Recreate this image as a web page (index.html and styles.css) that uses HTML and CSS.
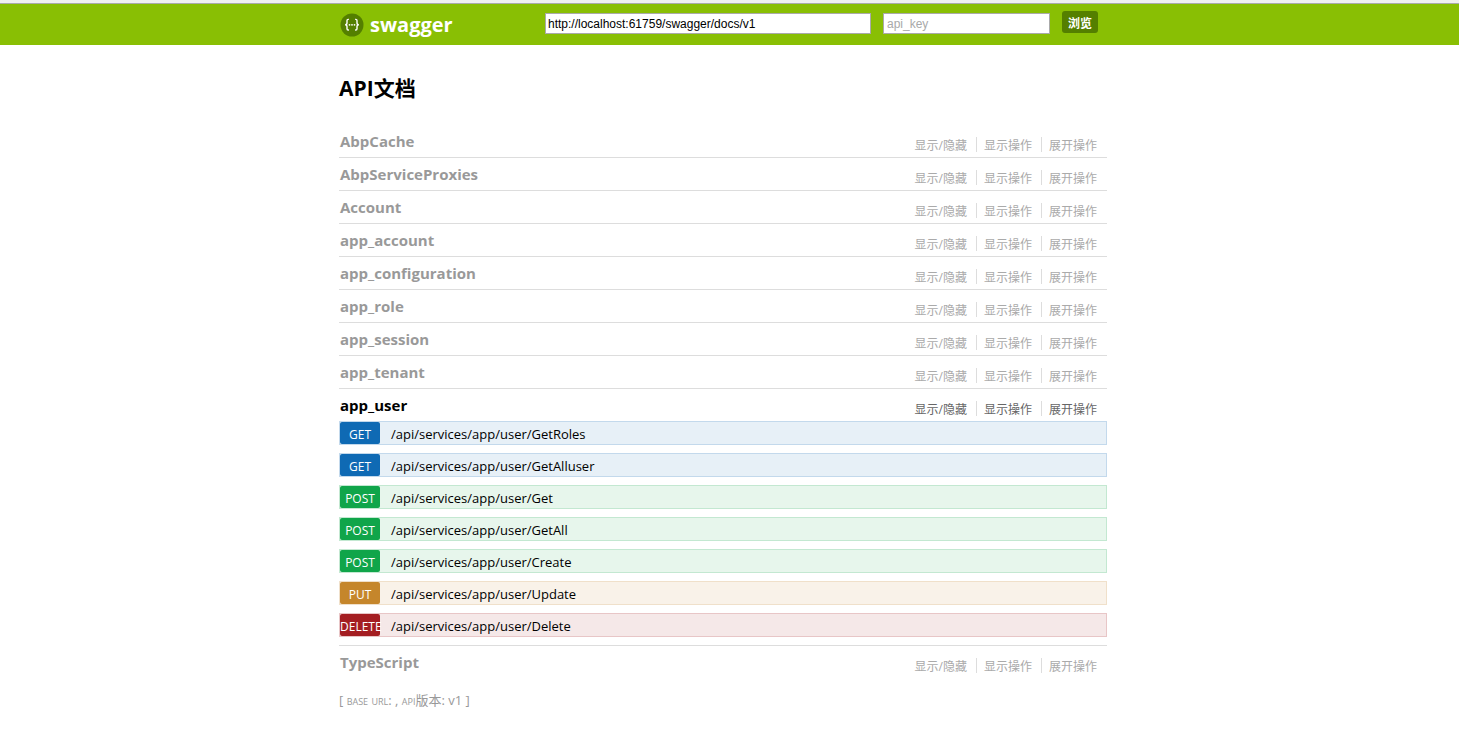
FILE: index.html
```html
<!DOCTYPE html>
<html lang="zh-CN">
<head>
<meta charset="utf-8">
<title>API文档</title>
<link rel="stylesheet" href="styles.css">
</head>
<body>
<header class="header">
  <div class="wrap header-inner">
    <a class="logo" href="#">
      <svg class="logo-icon" viewBox="0 0 24 24" aria-hidden="true">
        <circle cx="12" cy="12" r="11.5" fill="#547f00"/>
        <g fill="none" stroke="#fff" stroke-width="1.4">
          <path d="M8.9 6.4H8.2Q7 6.4 7 7.6V9.9Q7 11.7 5.1 11.7Q7 11.7 7 13.5V15.8Q7 17 8.2 17H8.9"/>
          <path d="M15.1 6.4H15.8Q17 6.4 17 7.6V9.9Q17 11.7 18.9 11.7Q17 11.7 17 13.5V15.8Q17 17 15.8 17H15.1"/>
        </g>
        <g fill="#fff"><circle cx="9.5" cy="11.8" r=".9"/><circle cx="12" cy="11.8" r=".9"/><circle cx="14.5" cy="11.8" r=".9"/></g>
      </svg>
      <span>swagger</span>
    </a>
    <form class="api-form">
      <input class="field field-url" type="text" aria-label="URL" value="http://localhost:61759/swagger/docs/v1">
      <input class="field field-key" type="text" aria-label="api_key" placeholder="api_key">
      <button class="explore" type="button">浏览</button>
    </form>
  </div>
</header>
<main class="page">
  <div class="wrap">
  <h1 class="title">API文档</h1>
  <ul class="resources">
    <li class="resource"><div class="heading"><h2><a href="#">AbpCache</a></h2><div class="options"><a href="#">显示/隐藏</a><a href="#">显示操作</a><a href="#">展开操作</a></div></div></li>
    <li class="resource"><div class="heading"><h2><a href="#">AbpServiceProxies</a></h2><div class="options"><a href="#">显示/隐藏</a><a href="#">显示操作</a><a href="#">展开操作</a></div></div></li>
    <li class="resource"><div class="heading"><h2><a href="#">Account</a></h2><div class="options"><a href="#">显示/隐藏</a><a href="#">显示操作</a><a href="#">展开操作</a></div></div></li>
    <li class="resource"><div class="heading"><h2><a href="#">app_account</a></h2><div class="options"><a href="#">显示/隐藏</a><a href="#">显示操作</a><a href="#">展开操作</a></div></div></li>
    <li class="resource"><div class="heading"><h2><a href="#">app_configuration</a></h2><div class="options"><a href="#">显示/隐藏</a><a href="#">显示操作</a><a href="#">展开操作</a></div></div></li>
    <li class="resource"><div class="heading"><h2><a href="#">app_role</a></h2><div class="options"><a href="#">显示/隐藏</a><a href="#">显示操作</a><a href="#">展开操作</a></div></div></li>
    <li class="resource"><div class="heading"><h2><a href="#">app_session</a></h2><div class="options"><a href="#">显示/隐藏</a><a href="#">显示操作</a><a href="#">展开操作</a></div></div></li>
    <li class="resource"><div class="heading"><h2><a href="#">app_tenant</a></h2><div class="options"><a href="#">显示/隐藏</a><a href="#">显示操作</a><a href="#">展开操作</a></div></div></li>
    <li class="resource active"><div class="heading"><h2><a href="#">app_user</a></h2><div class="options"><a href="#">显示/隐藏</a><a href="#">显示操作</a><a href="#">展开操作</a></div></div>
      <ul class="operations">
        <li class="operation get"><a class="method" href="#">GET</a><a class="path" href="#">/api/services/app/user/GetRoles</a></li>
        <li class="operation get"><a class="method" href="#">GET</a><a class="path" href="#">/api/services/app/user/GetAlluser</a></li>
        <li class="operation post"><a class="method" href="#">POST</a><a class="path" href="#">/api/services/app/user/Get</a></li>
        <li class="operation post"><a class="method" href="#">POST</a><a class="path" href="#">/api/services/app/user/GetAll</a></li>
        <li class="operation post"><a class="method" href="#">POST</a><a class="path" href="#">/api/services/app/user/Create</a></li>
        <li class="operation put"><a class="method" href="#">PUT</a><a class="path" href="#">/api/services/app/user/Update</a></li>
        <li class="operation delete"><a class="method" href="#">DELETE</a><a class="path" href="#">/api/services/app/user/Delete</a></li>
      </ul>
    </li>
    <li class="resource"><div class="heading"><h2><a href="#">TypeScript</a></h2><div class="options"><a href="#">显示/隐藏</a><a href="#">显示操作</a><a href="#">展开操作</a></div></div></li>
  </ul>
  <footer class="footer">[ <span class="caps">base url</span>: , <span class="caps">api</span>版本: v1 ]</footer>
  </div>
</main>
</body>
</html>
```
FILE: styles.css
```css
* { box-sizing: border-box; }
body {
  margin: 0;
  background: #fff;
  color: #000;
  font-family: "Open Sans", "Noto Sans CJK SC", sans-serif;
}
a { color: inherit; text-decoration: none; }
ul { list-style: none; margin: 0; padding: 0; }
h1, h2 { margin: 0; }

.header {
  padding-right: 13px;
  background: #89bf04;
  border-top: 3px solid #f0f0f0;
  box-shadow: inset 0 1px #aaa;
}
.wrap { max-width: 768px; margin: 0 auto; }
.header-inner {
  display: flex;
  align-items: center;
  justify-content: space-between;
  height: 42px;
  padding-right: 9px;
}
.logo {
  display: flex;
  align-items: center;
  gap: 6px;
  padding: 2px 0 0 1px;
  color: #fff;
  font-size: 20px;
  line-height: 24px;
  font-weight: 700;
}
.logo-icon { width: 24px; height: 24px; }
.api-form { display: flex; align-items: center; gap: 12px; padding-bottom: 2px; }
.field {
  height: 21px;
  padding: 3px 2px 1px;
  border: 1px solid #aaa;
  background: #fff;
  color: #000;
  font: 12px "Liberation Sans", sans-serif;
}
.field-url { width: 326px; }
.field-key { width: 167px; padding-left: 3px; }
.field::placeholder { color: #a9a9a9; opacity: 1; }
.explore {
  height: 22px;
  margin-top: -2px;
  padding: 1px 6px 0;
  border: 0;
  border-radius: 3px;
  background: #547f00;
  color: #fff;
  font: 700 12px/22px "Noto Sans CJK SC", sans-serif;
}

.page { padding: 28px 13px 28px 0; }
.title { font-size: 21px; line-height: 30px; font-weight: 700; }
.resources { margin-top: 22px; }
.resource { border-bottom: 1px solid #ddd; }
.resource:last-child { border-bottom: 0; }
.heading {
  display: flex;
  justify-content: space-between;
  height: 32px;
  padding: 0 1px;
  color: #999;
}
.heading h2 { font-size: 15px; line-height: 32px; font-weight: 700; }
.options { display: flex; padding-top: 12px; color: #aaa; }
.options a {
  height: 15px;
  padding: 0 9px 0 7px;
  font-size: 12px;
  line-height: 18px;
}
.options a + a { border-left: 1px solid #ddd; }
.active .heading { color: #000; }
.active .options { color: #666; }

.operations { display: grid; gap: 8px; padding-bottom: 8px; }
.operation { display: flex; height: 24px; border: 1px solid; line-height: 24px; }
.method {
  width: 40px;
  height: 22px;
  border-radius: 2px;
  color: #fff;
  font-size: 12px;
  line-height: 26px;
  text-align: center;
}
.path { padding-left: 11px; font-size: 13px; color: #000; }
.get { background: #e7f0f7; border-color: #c3d9ec; }
.get .method { background: #0f6ab4; }
.post { background: #e7f6ec; border-color: #c3e8d1; }
.post .method { background: #10a54a; }
.put { background: #f9f2e9; border-color: #f0e0ca; }
.put .method { background: #c5862b; }
.delete { background: #f5e8e8; border-color: #e8c6c7; }
.delete .method { background: #a41e22; }

.footer { margin-top: 12px; color: #999; font-size: 13px; line-height: 20px; }
.caps { font-variant: small-caps; }
```
